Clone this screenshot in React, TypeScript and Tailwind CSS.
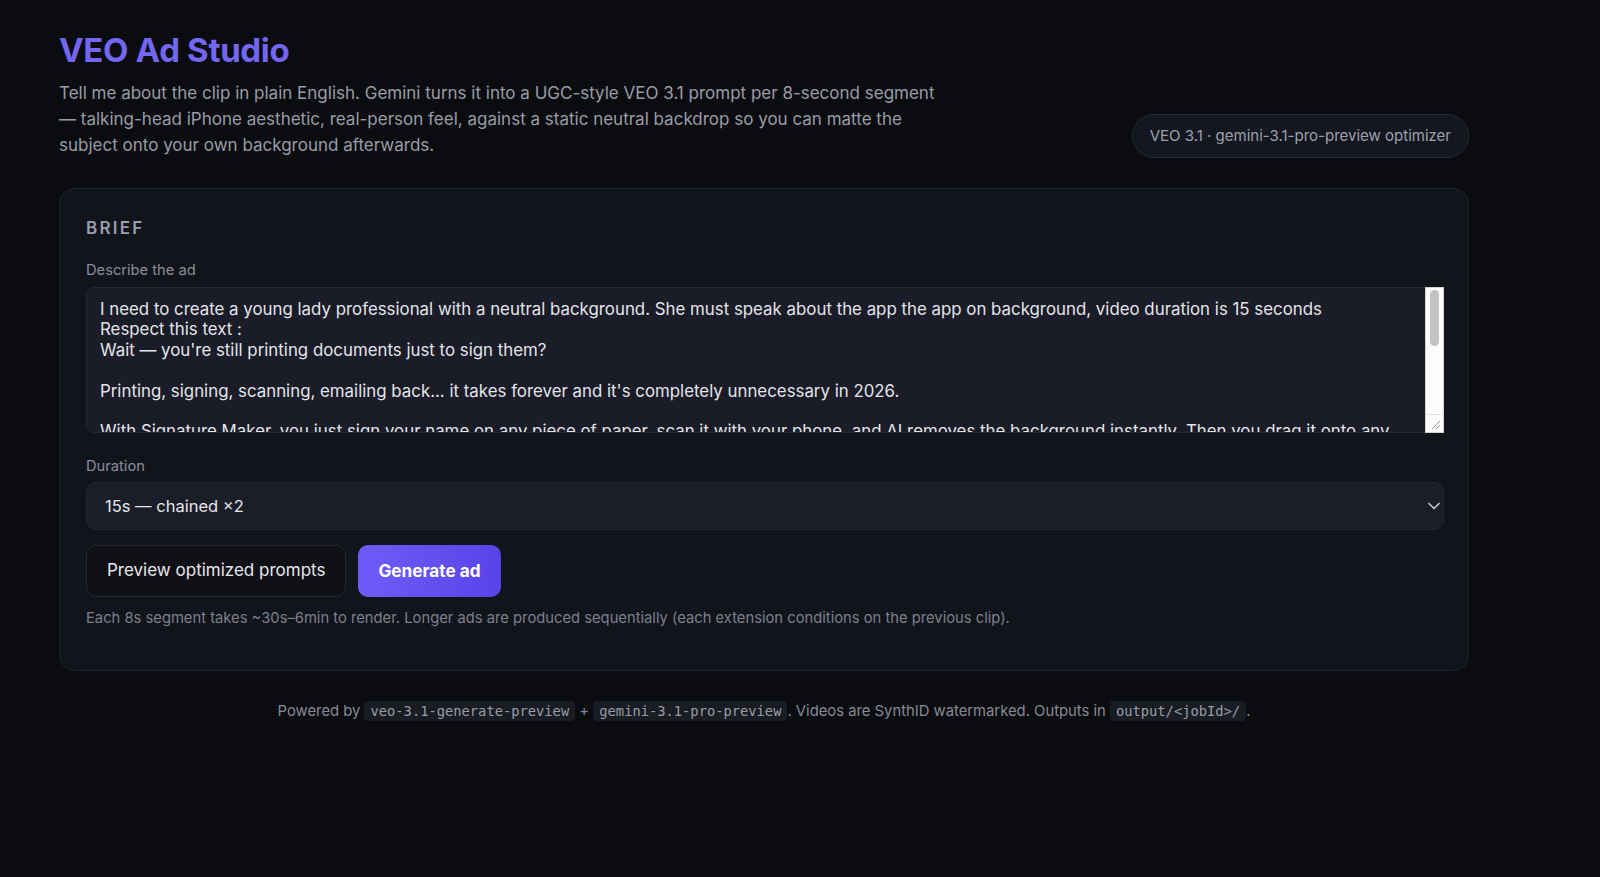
import { ChevronDown } from "lucide-react";

const BRIEF_TEXT = `I need to create a young lady professional with a neutral background. She must speak about the app the app on background, video duration is 15 seconds
Respect this text :
Wait — you're still printing documents just to sign them?

Printing, signing, scanning, emailing back... it takes forever and it's completely unnecessary in 2026.

With Signature Maker, you just sign your name on any piece of paper, scan it with your phone, and AI removes the background instantly. Then you drag it onto any document — PDFs, contracts, leases, invoices — and you're done.

No printer. No scanner. No wasted afternoon.

Your signature, saved once, ready everywhere.

Download Signature Maker and sign your next document in seconds.

Tone: friendly, confident, a little playful. Natural hand gestures, direct eye contact with the camera.

End on a smile.`;

function Code({ children }: { children: React.ReactNode }) {
  return (
    <code className="rounded-[4px] bg-[#1a1c23] px-[6px] py-[2px] font-['DejaVu_Sans_Mono',monospace] text-[13.75px] text-[#9a9da7]">
      {children}
    </code>
  );
}

export default function App() {
  return (
    <div className="min-h-[877px] bg-[#0b0c10] font-['Inter',sans-serif] text-[#e5e6ea]">
      <div className="ml-[59px] w-[1410px] pt-[31px]">
        <header className="flex items-end justify-between">
          <div className="max-w-[884px]">
            <h1 className="text-[33px] font-bold leading-[38px] tracking-[-0.01em] text-[#7366f0]">
              VEO Ad Studio
            </h1>
            <p className="mt-[11px] text-[17px] leading-[26px] text-[#9a9ca6]">
              Tell me about the clip in plain English. Gemini turns it into a UGC-style VEO 3.1 prompt per 8-second segment — talking-head iPhone aesthetic, real-person feel, against a static neutral backdrop so you can matte the subject onto your own background afterwards.
            </p>
          </div>
          <div className="rounded-full border border-[#272a35] bg-[#141620] px-[17px] py-[11px] text-[15px] leading-[20px] text-[#9ea1ab]">
            VEO 3.1 · gemini-3.1-pro-preview optimizer
          </div>
        </header>

        <section className="mt-[30px] rounded-[16px] border border-[#21242f] bg-[#12141c] pb-[42px] pl-[26px] pr-[24px] pt-[27px]">
          <h2 className="text-[17px] font-semibold uppercase leading-[24px] tracking-[0.13em] text-[#9a9dab]">
            Brief
          </h2>

          <label className="mt-[20px] block text-[14.7px] leading-[20px] text-[#8a8d99]">
            Describe the ad
          </label>
          <div className="mt-[7px] flex h-[146px] rounded-[8px] border border-[#242735] bg-[#1a1c27]">
            <textarea
              defaultValue={BRIEF_TEXT}
              className="block h-full min-w-0 flex-1 resize-none overflow-hidden bg-transparent pl-[13px] pr-[2px] pt-[11px] text-[16.85px] leading-[20.4px] text-[#e4e5ea] outline-none"
            />
            <div className="-my-px -mr-px flex w-[19px] flex-col border border-[#d4d4d4] bg-[#fcfcfc]">
              <div className="flex-1 px-[4px] pt-[2px]">
                <div className="h-[56px] rounded-full bg-[#c3c3c3]" />
              </div>
              <div className="flex h-[18px] items-end justify-end border-t border-[#e2e2e2] p-[2px]">
                <svg width="10" height="10" viewBox="0 0 10 10">
                  <line x1="1" y1="9" x2="9" y2="1" stroke="#9a9a9a" strokeWidth="1" />
                  <line x1="5" y1="9" x2="9" y2="5" stroke="#9a9a9a" strokeWidth="1" />
                </svg>
              </div>
            </div>
          </div>

          <label className="mt-[23px] block text-[14.7px] leading-[20px] text-[#8a8d99]">
            Duration
          </label>
          <div className="relative mt-[6px]">
            <select
              defaultValue="15"
              className="block h-[48px] w-full appearance-none rounded-[10px] border border-[#242735] bg-[#1b1d28] pl-[18px] text-[16.5px] text-[#e4e5ea] outline-none"
            >
              <option value="8">8s — single segment</option>
              <option value="15">15s — chained ×2</option>
              <option value="22">22s — chained ×3</option>
            </select>
            <ChevronDown
              size={20}
              strokeWidth={2}
              className="pointer-events-none absolute right-0 top-1/2 -translate-y-1/2 text-[#c5c7cf]"
            />
          </div>

          <div className="mt-[15px] flex gap-[12px]">
            <button className="h-[52px] rounded-[10px] border border-[#262935] bg-[#0f1016] px-[20px] text-[17px] font-normal text-[#e6e7eb]">
              Preview optimized prompts
            </button>
            <button className="h-[52px] rounded-[10px] bg-gradient-to-r from-[#6e5cf8] to-[#5a42e8] px-[20px] text-[17.2px] font-bold text-white">
              Generate ad
            </button>
          </div>

          <p className="mt-[11px] text-[14.75px] leading-[20px] text-[#7d808d]">
            Each 8s segment takes ~30s–6min to render. Longer ads are produced sequentially (each extension conditions on the previous clip).
          </p>
        </section>

        <footer className="mt-[30px] text-center text-[14.8px] leading-[20px] text-[#878a94]">
          Powered by <Code>veo-3.1-generate-preview</Code> + <Code>gemini-3.1-pro-preview</Code>. Videos are SynthID watermarked. Outputs in <Code>output/&lt;jobId&gt;/</Code>.
        </footer>
      </div>
    </div>
  );
}
